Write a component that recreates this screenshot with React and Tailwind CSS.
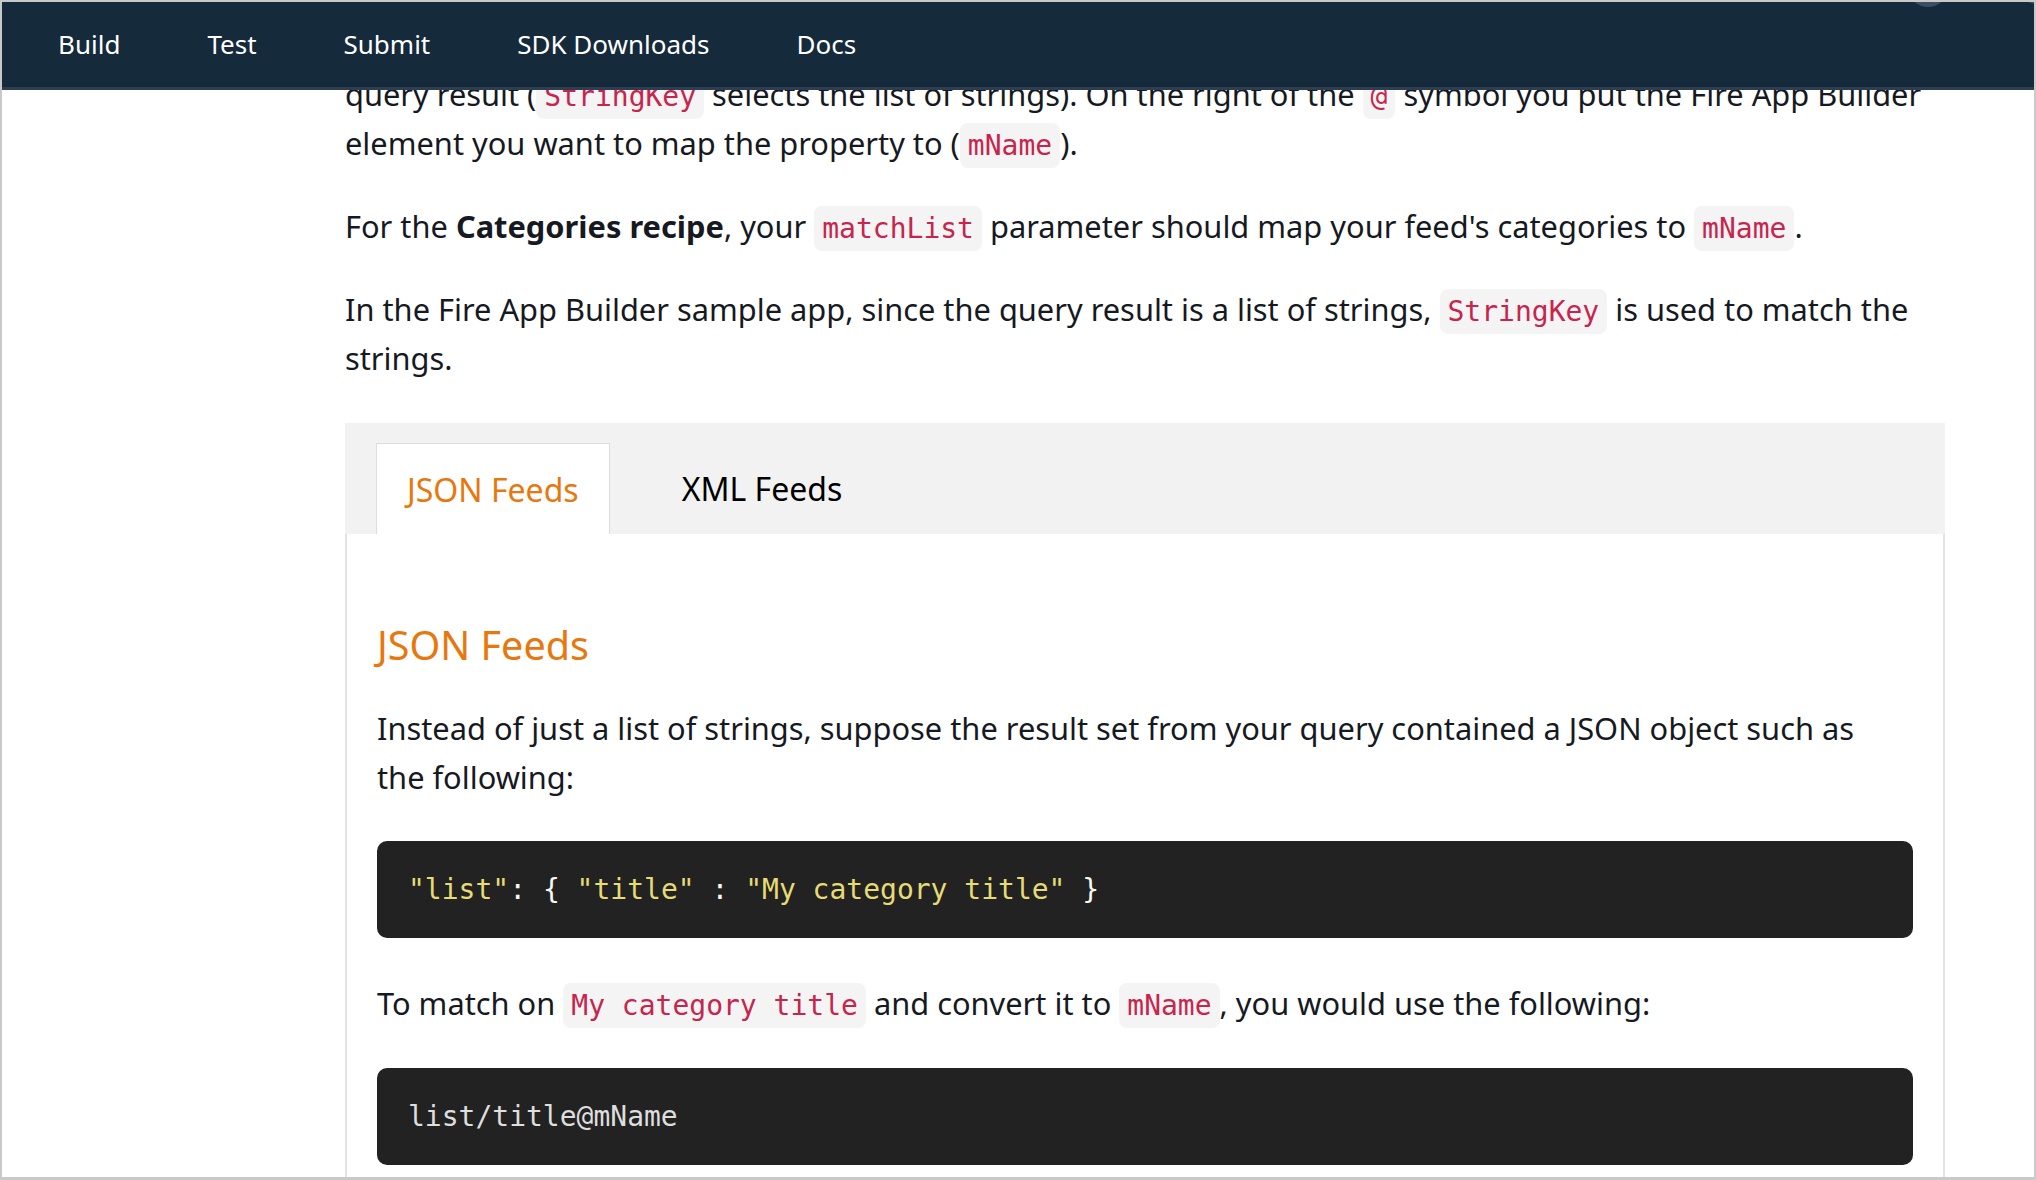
const SANS = { fontFamily: '"Noto Sans", "Open Sans", Arial, sans-serif' };

function Code({ children }) {
  return (
    <code className="font-['DejaVu_Sans_Mono',monospace] text-[28px] leading-none text-[#c7254e] bg-[#f4f4f4] rounded-[8px] px-[8px] py-[6px]">
      {children}
    </code>
  );
}

const NAV = ['Build', 'Test', 'Submit', 'SDK Downloads', 'Docs'];

export default function App() {
  return (
    <div
      className="relative h-[1180px] w-full overflow-hidden bg-white border-t-2 border-l-2 border-r-2 border-b-[3px] border-[#c9c9c9] text-[#16191f]"
      style={SANS}
    >
      <nav className="absolute top-0 left-0 right-0 z-10 h-[88px] bg-[#152a3b] border-b-[3px] border-[#2c3e50] flex items-center pl-[56px] gap-[87px] text-[26px] text-white">
        {NAV.map(item => (
          <span key={item}>{item}</span>
        ))}
        <span className="absolute left-[1906px] top-[-35px] w-[40px] h-[40px] rounded-full bg-[#3c4d66]" />
        <span className="absolute left-[2015px] top-[-38px] w-[40px] h-[40px] rounded-full bg-[#3c4d66]" />
      </nav>

      <div className="ml-[343px] w-[1600px] pt-[68px] text-[30.8px] leading-[49px]">
        <p className="mb-[34px]">
          query result (<Code>StringKey</Code> selects the list of strings). On the right of the <Code>@</Code> symbol you put the Fire App Builder element you want to map the property to (<Code>mName</Code>).
        </p>
        <p className="mb-[34px]">
          For the <strong className="font-bold">Categories recipe</strong>, your <Code>matchList</Code> parameter should map your feed's categories to <Code>mName</Code>.
        </p>
        <p>
          In the Fire App Builder sample app, since the query result is a list of strings, <Code>StringKey</Code> is used to match the strings.
        </p>

        <div className="mt-[40px]">
          <div className="h-[111px] bg-[#f2f2f2] flex items-end pl-[31px] text-[32px]">
            <div className="h-[91px] px-[30px] bg-white border border-b-0 border-[#dddddd] text-[#e8770e] flex items-center">
              JSON Feeds
            </div>
            <div className="h-[91px] ml-[72px] flex items-center text-black">XML Feeds</div>
          </div>

          <div className="border-x-2 border-[#e2e2e2] px-[30px] pt-[87px] pb-[40px]">
            <h2 className="text-[39.5px] leading-[48px] text-[#e8770e]">JSON Feeds</h2>
            <p className="mt-[35px]">
              Instead of just a list of strings, suppose the result set from your query contained a JSON object such as
              <br />
              the following:
            </p>
            <div className="mt-[39px] h-[97px] rounded-[10px] bg-[#222222] px-[31px] flex items-center font-['DejaVu_Sans_Mono',monospace] text-[28px] whitespace-pre">
              <span className="text-[#e6db74]">"list"</span>
              <span className="text-[#f8f8f2]">: {'{'} </span>
              <span className="text-[#e6db74]">"title"</span>
              <span className="text-[#f8f8f2]"> : </span>
              <span className="text-[#e6db74]">"My category title"</span>
              <span className="text-[#f8f8f2]"> {'}'}</span>
            </div>
            <p className="mt-[41px]">
              To match on <Code>My category title</Code> and convert it to <Code>mName</Code>, you would use the following:
            </p>
            <div className="mt-[40px] h-[97px] rounded-[10px] bg-[#222222] px-[31px] flex items-center font-['DejaVu_Sans_Mono',monospace] text-[28px] text-[#dedede]">
              list/title@mName
            </div>
          </div>
        </div>
      </div>
    </div>
  );
}
